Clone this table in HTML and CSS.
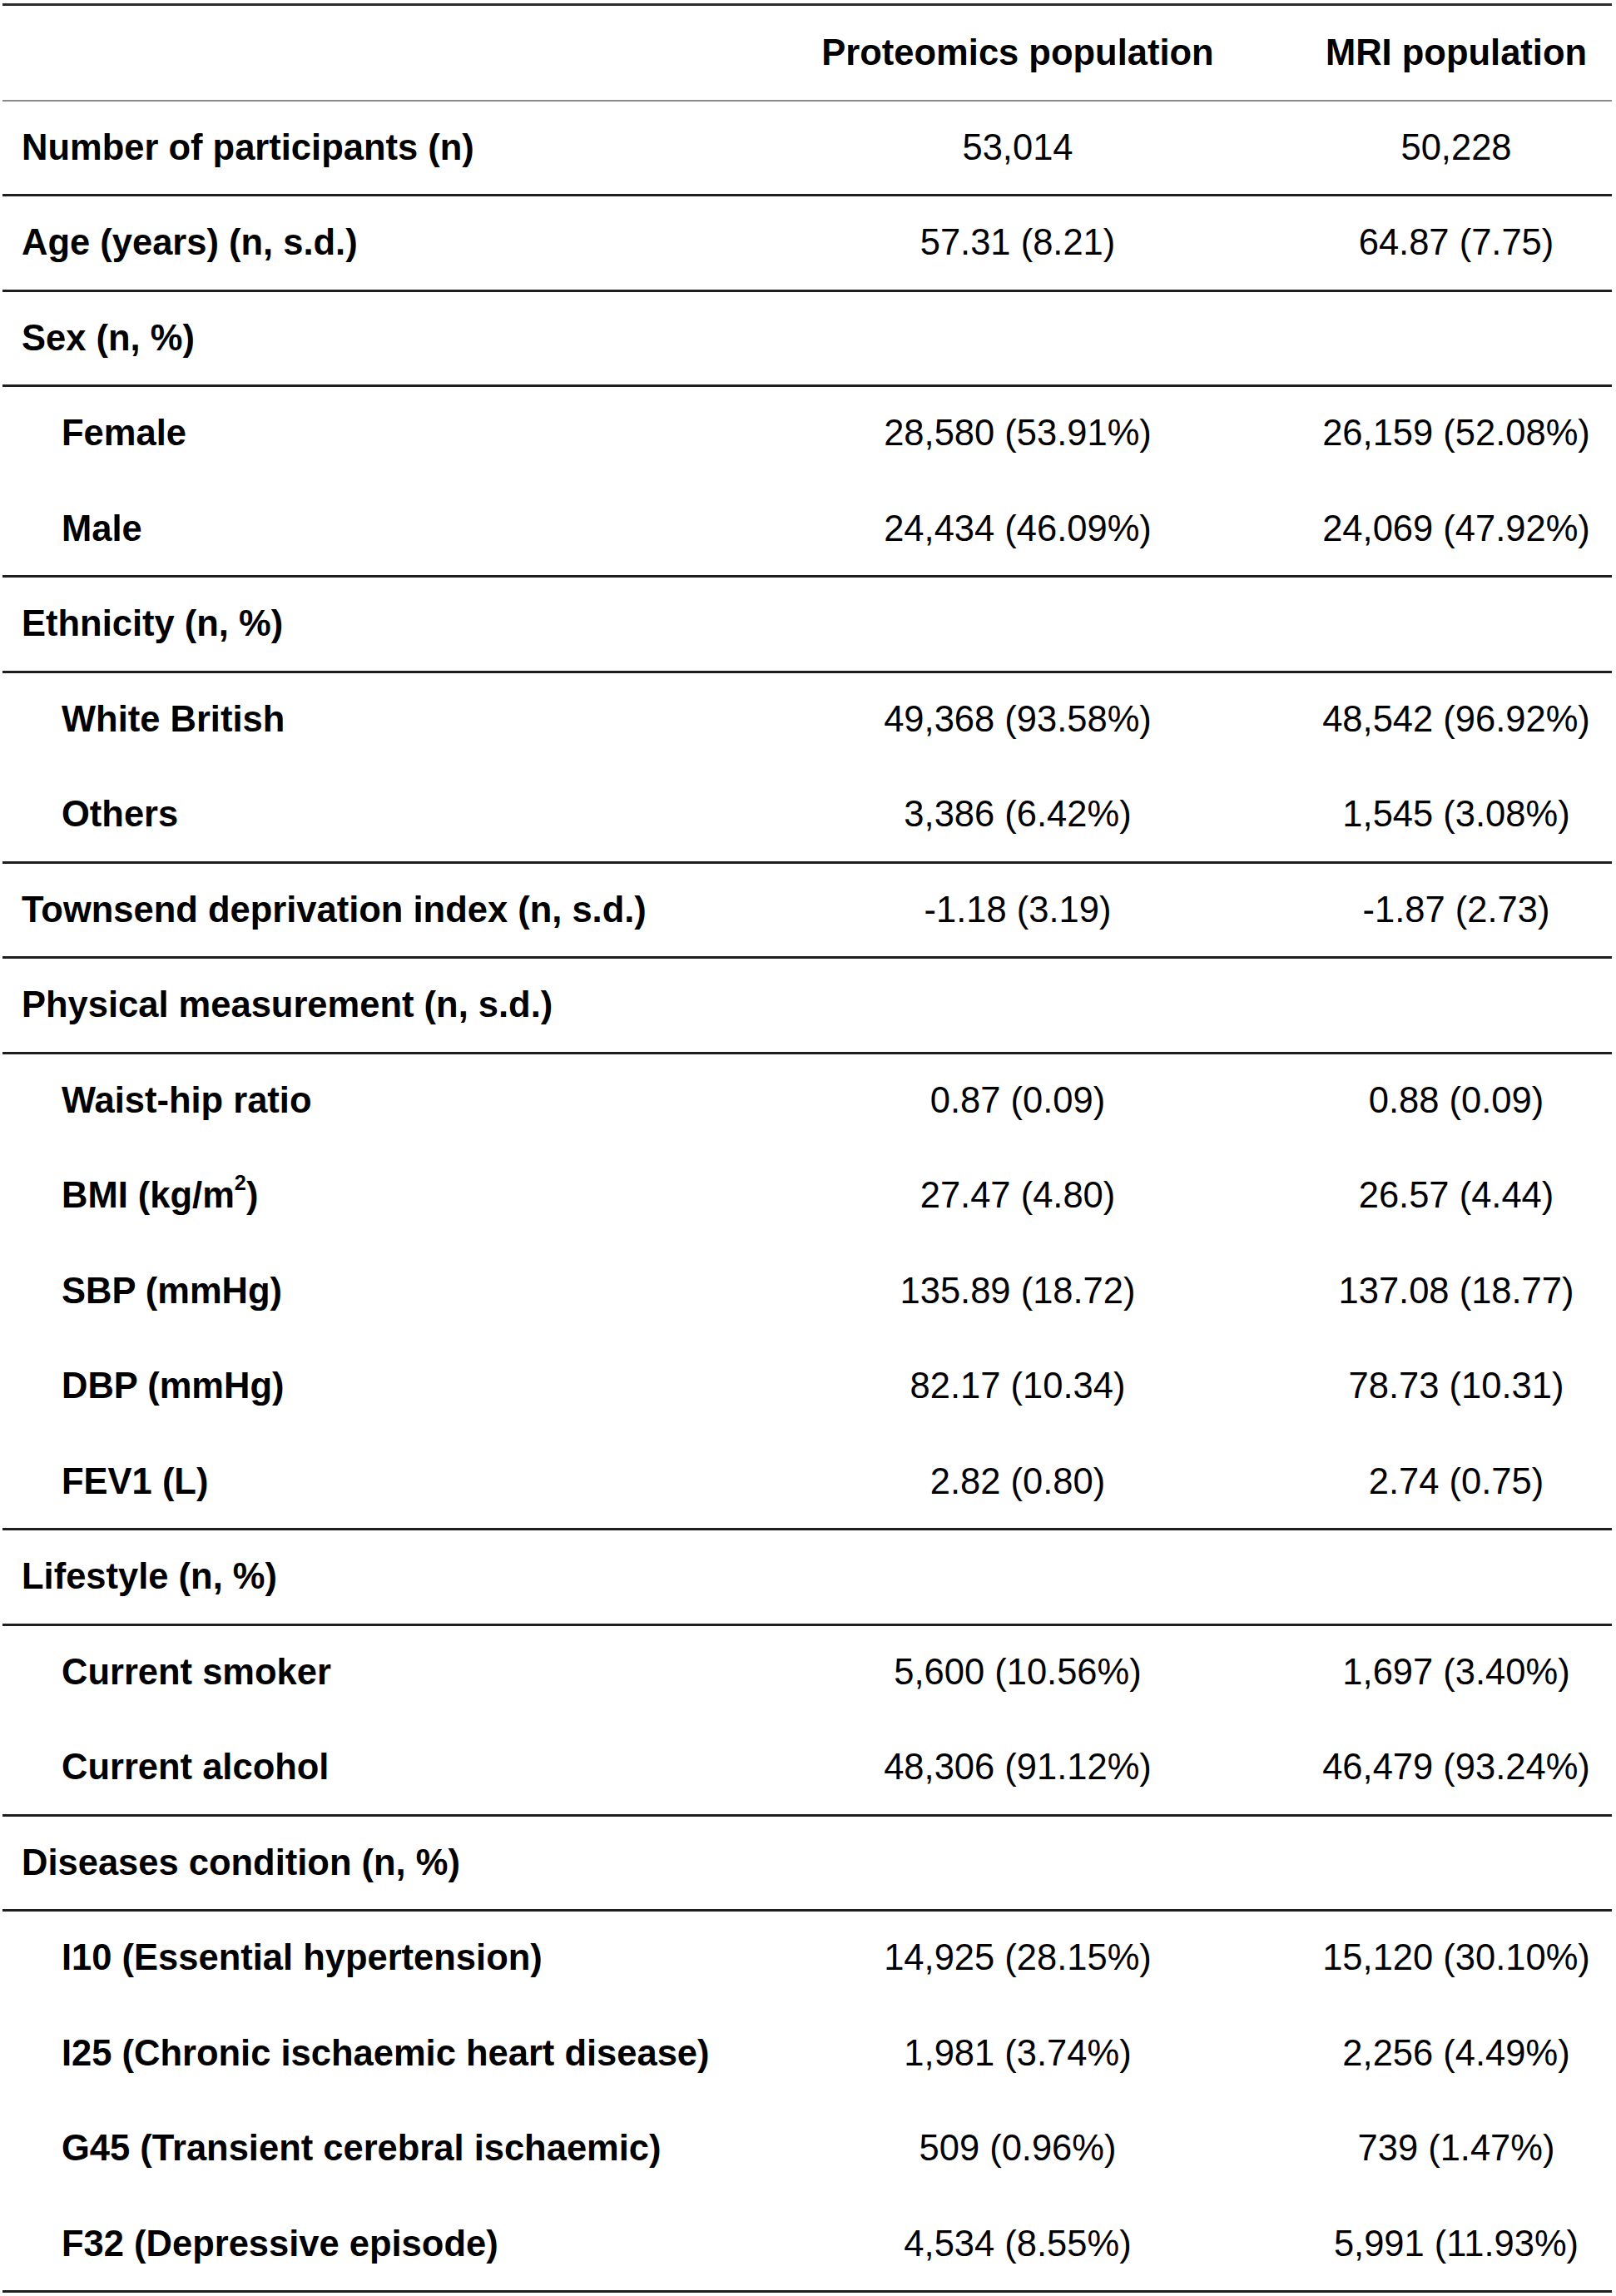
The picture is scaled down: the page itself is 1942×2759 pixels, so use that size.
FILE: index.html
```html
<!DOCTYPE html>
<html lang="en">
<head>
<meta charset="utf-8">
<title>Population characteristics</title>
<link rel="stylesheet" href="styles.css">
</head>
<body>
<div class="table">
  <div class="row head line-light">
    <div class="label"></div>
    <div class="val">Proteomics population</div>
    <div class="val">MRI population</div>
  </div>
  <div class="row line">
    <div class="label">Number of participants (n)</div>
    <div class="val">53,014</div>
    <div class="val">50,228</div>
  </div>
  <div class="row line">
    <div class="label">Age (years) (n, s.d.)</div>
    <div class="val">57.31 (8.21)</div>
    <div class="val">64.87 (7.75)</div>
  </div>
  <div class="row line">
    <div class="label">Sex (n, %)</div>
    <div class="val"></div>
    <div class="val"></div>
  </div>
  <div class="row">
    <div class="label sub">Female</div>
    <div class="val">28,580 (53.91%)</div>
    <div class="val">26,159 (52.08%)</div>
  </div>
  <div class="row line">
    <div class="label sub">Male</div>
    <div class="val">24,434 (46.09%)</div>
    <div class="val">24,069 (47.92%)</div>
  </div>
  <div class="row line">
    <div class="label">Ethnicity (n, %)</div>
    <div class="val"></div>
    <div class="val"></div>
  </div>
  <div class="row">
    <div class="label sub">White British</div>
    <div class="val">49,368 (93.58%)</div>
    <div class="val">48,542 (96.92%)</div>
  </div>
  <div class="row line">
    <div class="label sub">Others</div>
    <div class="val">3,386 (6.42%)</div>
    <div class="val">1,545 (3.08%)</div>
  </div>
  <div class="row line">
    <div class="label">Townsend deprivation index (n, s.d.)</div>
    <div class="val">-1.18 (3.19)</div>
    <div class="val">-1.87 (2.73)</div>
  </div>
  <div class="row line">
    <div class="label">Physical measurement (n, s.d.)</div>
    <div class="val"></div>
    <div class="val"></div>
  </div>
  <div class="row">
    <div class="label sub">Waist-hip ratio</div>
    <div class="val">0.87 (0.09)</div>
    <div class="val">0.88 (0.09)</div>
  </div>
  <div class="row">
    <div class="label sub">BMI (kg/m<span class="sup">2</span>)</div>
    <div class="val">27.47 (4.80)</div>
    <div class="val">26.57 (4.44)</div>
  </div>
  <div class="row">
    <div class="label sub">SBP (mmHg)</div>
    <div class="val">135.89 (18.72)</div>
    <div class="val">137.08 (18.77)</div>
  </div>
  <div class="row">
    <div class="label sub">DBP (mmHg)</div>
    <div class="val">82.17 (10.34)</div>
    <div class="val">78.73 (10.31)</div>
  </div>
  <div class="row line">
    <div class="label sub">FEV1 (L)</div>
    <div class="val">2.82 (0.80)</div>
    <div class="val">2.74 (0.75)</div>
  </div>
  <div class="row line">
    <div class="label">Lifestyle (n, %)</div>
    <div class="val"></div>
    <div class="val"></div>
  </div>
  <div class="row">
    <div class="label sub">Current smoker</div>
    <div class="val">5,600 (10.56%)</div>
    <div class="val">1,697 (3.40%)</div>
  </div>
  <div class="row line">
    <div class="label sub">Current alcohol</div>
    <div class="val">48,306 (91.12%)</div>
    <div class="val">46,479 (93.24%)</div>
  </div>
  <div class="row line">
    <div class="label">Diseases condition (n, %)</div>
    <div class="val"></div>
    <div class="val"></div>
  </div>
  <div class="row">
    <div class="label sub">I10 (Essential hypertension)</div>
    <div class="val">14,925 (28.15%)</div>
    <div class="val">15,120 (30.10%)</div>
  </div>
  <div class="row">
    <div class="label sub">I25 (Chronic ischaemic heart disease)</div>
    <div class="val">1,981 (3.74%)</div>
    <div class="val">2,256 (4.49%)</div>
  </div>
  <div class="row">
    <div class="label sub">G45 (Transient cerebral ischaemic)</div>
    <div class="val">509 (0.96%)</div>
    <div class="val">739 (1.47%)</div>
  </div>
  <div class="row line">
    <div class="label sub">F32 (Depressive episode)</div>
    <div class="val">4,534 (8.55%)</div>
    <div class="val">5,991 (11.93%)</div>
  </div>
</div>
</body>
</html>
```

FILE: styles.css
```css
html, body {
  margin: 0;
  padding: 0;
  background: #ffffff;
}

body {
  font-family: "Liberation Sans", Arial, sans-serif;
  font-size: 43.5px;
  color: #000000;
}

.table {
  width: 1934px;
  margin: 4px 0 0 3px;
  border-top: 3px solid #2b2b2b;
}

.row {
  display: grid;
  grid-template-columns: 880px 680px 374px;
  height: 114.5px;
  box-sizing: border-box;
  border-bottom: 3px solid transparent;
}

.row.line {
  border-bottom-color: #1e1e1e;
}

.row.line-light {
  border-bottom: 2px solid #8a8a8a;
  height: 114.5px;
}

.label {
  display: flex;
  align-items: center;
  padding-left: 23px;
  font-weight: bold;
  white-space: nowrap;
}

.label.sub {
  padding-left: 71px;
}

.val {
  display: flex;
  align-items: center;
  justify-content: center;
  white-space: nowrap;
}

.head .val {
  font-weight: bold;
}

.sup {
  font-size: 0.58em;
  position: relative;
  top: -0.62em;
  line-height: 0;
}
```
